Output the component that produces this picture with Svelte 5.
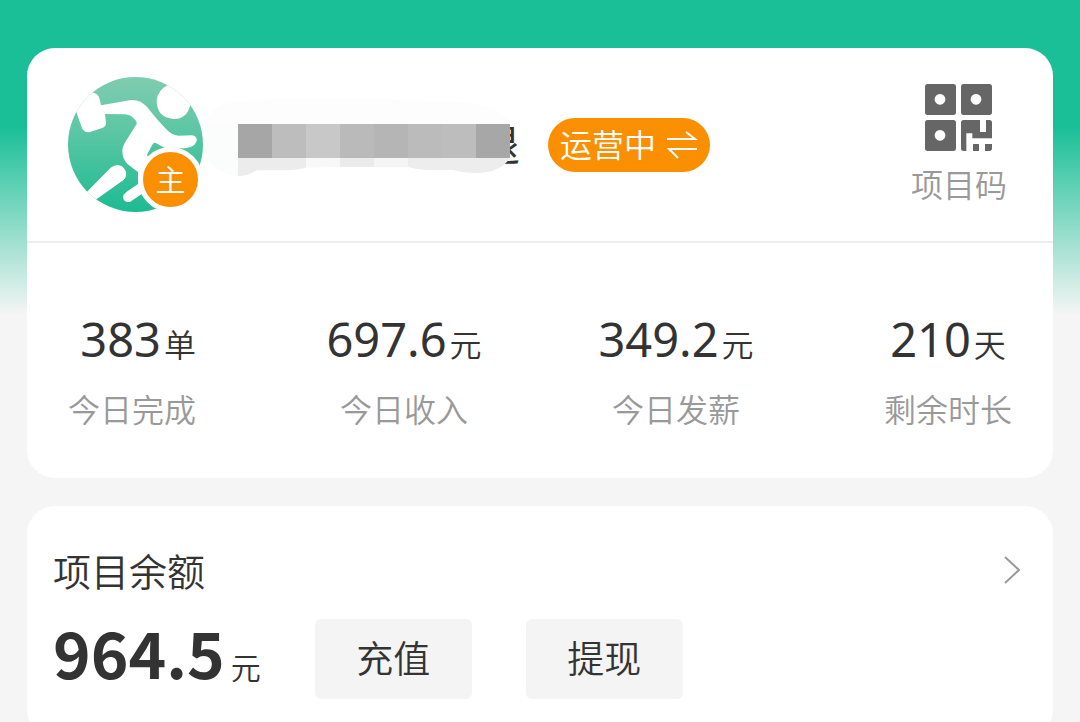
<script lang="ts">
	interface Stat {
		value: string;
		unit: string;
		label: string;
	}

	const stats: Stat[] = [
		{ value: '383', unit: '单', label: '今日完成' },
		{ value: '697.6', unit: '元', label: '今日收入' },
		{ value: '349.2', unit: '元', label: '今日发薪' },
		{ value: '210', unit: '天', label: '剩余时长' }
	];

	const mosaic = ['#a6a6a6', '#bdbdbd', '#c8c8c8', '#bababa', '#b5b5b5', '#bbbbbb', '#bdbdbd', '#a7a7a7'];
</script>

<main class="page">
	<section class="card">
		<header class="project">
			<div class="avatar">
				<svg viewBox="39 36 405 405" width="135" height="135" aria-hidden="true">
					<defs>
						<linearGradient id="avatar-fill" x1="0" y1="0" x2="0" y2="1">
							<stop offset="0" stop-color="#80ccb1" />
							<stop offset="0.35" stop-color="#61c7a5" />
							<stop offset="1" stop-color="#1dbb93" />
						</linearGradient>
						<clipPath id="avatar-clip">
							<circle cx="241.500" cy="238.500" r="202.500" />
						</clipPath>
					</defs>
					<g clip-path="url(#avatar-clip)">
						<rect x="39" y="36" width="405" height="405" fill="url(#avatar-fill)" />
						<g fill="#fff">
							<path d="M334 30 H450 V140 L406 120 Q396 162 356 162 Q305 158 305 106 Q308 76 338 60 Z" />
							<path d="M20 40 L100 40 L112 82 Q130 86 134 102 L138 121 L228 105 Q256 103 277 127 Q309 168 337 196 Q351 211 370 212 L411 211 Q427 214 425 228 Q420 242 405 247 Q385 252 350 250 L330 249 L302 234 Q296 232 292 239 L276 269 L290 300 L270 380 L226 410 Q209 415 204 398 Q204 389 213 382 L249 357 L249 321 L218 298 Q202 282 202 258 Q202 245 209 234 L245 177 Q247 170 238 162 Q227 149 210 148 L150 147 L153 174 Q153 184 144 188 L105 201 Q90 205 81 190 L64 141 Z" />
							<path d="M90 386 L167 308 Q185 294 203 305 Q219 320 211 338 Q207 346 198 350 L112 412 Z" />
						</g>
					</g>
				</svg>
				<span class="badge">主</span>
			</div>

			<h1 class="name">
				<span class="name-text">退</span>
				<svg class="mask" viewBox="9 15 951 300" width="317" height="100" aria-hidden="true">
					<path d="M12 102 Q35 42 110 34 Q300 20 460 26 Q660 28 800 38 Q905 50 931 102 Z" fill="#fdfdfd" />
					<path d="M12 102 H114 V258 Q35 250 12 185 Z" fill="#fafdfb" />
					<path d="M114 204 H318 V233 Q285 241 245 241 H170 Q145 258 114 258 Z" fill="#ececec" />
					<path d="M318 204 H420 V231 L318 233 Z" fill="#f8f8f8" />
					<path d="M420 204 H522 V231 H420 Z" fill="#ebebeb" />
					<path d="M522 204 H624 V231 H522 Z" fill="#f5f5f5" />
					<path d="M624 204 H930 Q900 249 828 249 Q790 249 760 240 H680 Q650 240 624 231 Z" fill="#ededed" />
					{#each mosaic as fill, i}
						<rect x={114 + i * 102} y="102" width="102" height="102" {fill} />
					{/each}
				</svg>
			</h1>

			<button class="status" type="button">
				<span>运营中</span>
				<svg viewBox="0 0 32 28" width="32" height="28" fill="none" stroke="currentColor" stroke-width="2" aria-hidden="true">
					<path d="M1 8 H29 L20 1 M31 18 H3 L12 27" />
				</svg>
			</button>

			<button class="qr" type="button">
				<svg viewBox="0 0 201 201" width="67" height="67" fill="#666" aria-hidden="true">
					<path fill-rule="evenodd" d="M8 0H85Q93 0 93 8V85Q93 93 85 93H8Q0 93 0 85V8Q0 0 8 0Z M45 30a16 16 0 1 0 .1 0Z" />
					<path fill-rule="evenodd" d="M116 0H193Q201 0 201 8V85Q201 93 193 93H116Q108 93 108 85V8Q108 0 116 0Z M153 30a16 16 0 1 0 .1 0Z" />
					<path fill-rule="evenodd" d="M8 108H85Q93 108 93 116V193Q93 201 85 201H8Q0 201 0 193V116Q0 108 8 108Z M45 138a16 16 0 1 0 .1 0Z" />
					<path d="M116 108H165V144H183V108H193Q201 108 201 116V163H142V148H124V201H116Q108 201 108 193V116Q108 108 116 108Z" />
					<path d="M144 180H162V201H144Z M180 180H201V193Q201 201 193 201H180Z" />
				</svg>
				<span>项目码</span>
			</button>
		</header>

		<ul class="stats">
			{#each stats as stat (stat.label)}
				<li class="stat">
					<span class="stat-value">{stat.value}<span class="unit">{stat.unit}</span></span>
					<span class="stat-label">{stat.label}</span>
				</li>
			{/each}
		</ul>
	</section>

	<section class="card balance">
		<a class="balance-link" href="#balance">
			<span>项目余额</span>
			<svg viewBox="0 0 18 30" width="18" height="30" fill="none" stroke="#999" stroke-width="2" aria-hidden="true">
				<path d="M2 2 L16 15 L2 28" />
			</svg>
		</a>
		<div class="balance-row">
			<span class="amount"><strong>964.5</strong><span>元</span></span>
			<button class="action" type="button">充值</button>
			<button class="action" type="button">提现</button>
		</div>
	</section>
</main>

<style>
	:global(body) {
		background: #f5f5f5;
	}

	.page {
		box-sizing: border-box;
		min-height: 100vh;
		padding: 48px 27px 28px;
		display: flex;
		flex-direction: column;
		gap: 28px;
		background: linear-gradient(#1bbf97 0, #1bbf97 128px, #f5f5f5 315px);
		color: #333;
		font-family: 'Noto Sans CJK SC', sans-serif;
		font-weight: 350;
	}

	button {
		padding: 0;
		border: 0;
		background: none;
		color: inherit;
		font: inherit;
		cursor: pointer;
	}

	svg {
		display: block;
	}

	.card {
		background: #fff;
		border-radius: 28px;
	}

	.project {
		display: flex;
		align-items: center;
		height: 193px;
		padding: 0 46px 0 41px;
		border-bottom: 2px solid #ededed;
	}

	.avatar {
		position: relative;
	}

	.badge {
		position: absolute;
		right: 0;
		bottom: 0;
		width: 55px;
		height: 55px;
		border: 5px solid #fff;
		border-radius: 50%;
		background: #fb8f02;
		color: #fff;
		font-size: 30px;
		line-height: 52px;
		text-align: center;
	}

	.name {
		display: grid;
		align-items: center;
		margin: 0;
		font-size: 42px;
		font-weight: 400;
		line-height: 44px;
	}

	.name-text,
	.mask {
		grid-area: 1 / 1;
	}

	.name-text {
		justify-self: end;
		padding-bottom: 4px;
	}

	.status {
		display: flex;
		align-items: center;
		gap: 10px;
		height: 54px;
		margin-left: 28px;
		padding: 0 12px;
		border-radius: 27px;
		background: #fb8f02;
		color: #fff;
		font-size: 32px;
		line-height: 50px;
	}

	.status span {
		padding-bottom: 4px;
	}

	.qr {
		display: flex;
		flex-direction: column;
		align-items: center;
		gap: 14px;
		margin-left: auto;
		padding-bottom: 4px;
		color: #999;
		font-size: 32px;
		line-height: 36px;
	}

	.stats {
		display: grid;
		grid-template-columns: repeat(4, 128px);
		justify-content: space-between;
		margin: 0;
		padding: 68px 41px 50px;
		list-style: none;
	}

	.stat {
		display: flex;
		flex-direction: column;
		align-items: center;
		gap: 21px;
		white-space: nowrap;
	}

	.stat:first-child {
		align-items: flex-end;
	}

	.stat-value {
		font-family: 'Noto Sans', 'Noto Sans CJK SC', sans-serif;
		font-size: 47px;
		font-weight: 400;
		line-height: 56px;
	}

	.unit {
		margin-left: 3px;
		font-family: 'Noto Sans CJK SC', sans-serif;
		font-size: 32px;
		font-weight: 350;
		line-height: 32px;
	}

	.stat-label {
		color: #999;
		font-size: 32px;
		line-height: 40px;
	}

	.balance {
		padding: 42px 32px 39px 26px;
	}

	.balance-link {
		display: flex;
		align-items: center;
		justify-content: space-between;
		color: inherit;
		font-size: 38px;
		line-height: 44px;
		text-decoration: none;
	}

	.balance-row {
		display: flex;
		align-items: flex-start;
		gap: 54px;
		margin-top: 27px;
	}

	.amount {
		display: flex;
		align-items: baseline;
		gap: 6px;
		font-size: 30px;
		line-height: 32px;
	}

	.amount strong {
		font-size: 64px;
		font-weight: 700;
		line-height: 64px;
	}

	.action {
		width: 157px;
		height: 80px;
		padding-bottom: 4px;
		border-radius: 6px;
		background: #f4f4f4;
		font-size: 37px;
	}
</style>
